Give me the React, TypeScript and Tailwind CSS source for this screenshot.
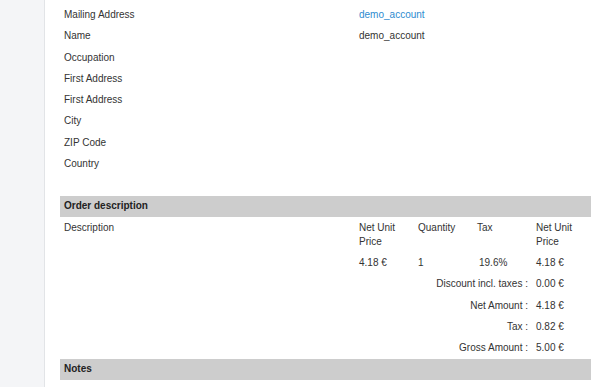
import React from 'react';

const cell = 'px-1 py-[3.65px] leading-[14px] align-top';

const customer: { label: string; value?: string; link?: boolean }[] = [
  { label: 'Mailing Address', value: 'demo_account', link: true },
  { label: 'Name', value: 'demo_account' },
  { label: 'Occupation' },
  { label: 'First Address' },
  { label: 'First Address' },
  { label: 'City' },
  { label: 'ZIP Code' },
  { label: 'Country' },
];

const totals = [
  { label: 'Discount incl. taxes :', value: '0.00 €' },
  { label: 'Net Amount :', value: '4.18 €' },
  { label: 'Tax :', value: '0.82 €' },
  { label: 'Gross Amount :', value: '5.00 €' },
];

function SectionBar({ title }: { title: string }) {
  return (
    <div className="bg-[#cdcdcd] px-1 py-[3.65px] leading-[14px] font-bold text-[#222]">
      {title}
    </div>
  );
}

export default function App() {
  return (
    <div
      className="flex h-[387px] w-[600px] overflow-hidden bg-white text-[10px] text-[#333]"
      style={{ fontFamily: '"Liberation Sans", Arial, sans-serif' }}
    >
      <aside className="w-[45px] shrink-0 border-r border-[#e2e4e7] bg-[#f4f5f7]" />
      <main className="flex-1 pt-[4.3px] pl-[15px] pr-[9px]">
        <table className="w-full table-fixed border-collapse">
          <colgroup>
            <col className="w-[295px]" />
            <col />
          </colgroup>
          <tbody>
            {customer.map((row, i) => (
              <tr key={i}>
                <td className={cell}>{row.label}</td>
                <td className={`${cell} ${row.link ? 'text-[#2e8bcf]' : ''}`}>{row.value}</td>
              </tr>
            ))}
            <tr>
              <td className={cell}>&nbsp;</td>
              <td className={cell}></td>
            </tr>
          </tbody>
        </table>

        <SectionBar title="Order description" />
        <table className="w-full table-fixed border-collapse">
          <colgroup>
            <col className="w-[295px]" />
            <col className="w-[59px]" />
            <col className="w-[59px]" />
            <col className="w-[59px]" />
            <col />
          </colgroup>
          <tbody>
            <tr>
              <td className={cell}>Description</td>
              <td className={cell}>
                Net Unit
                <br />
                Price
              </td>
              <td className={cell}>Quantity</td>
              <td className={cell}>Tax</td>
              <td className={cell}>
                Net Unit
                <br />
                Price
              </td>
            </tr>
            <tr>
              <td className={cell}></td>
              <td className={cell}>4.18 €</td>
              <td className={cell}>1</td>
              <td className={`${cell} pl-[6px]`}>19.6%</td>
              <td className={cell}>4.18 €</td>
            </tr>
            {totals.map((t) => (
              <tr key={t.label}>
                <td colSpan={4} className={`${cell} text-right`}>
                  {t.label}
                </td>
                <td className={cell}>{t.value}</td>
              </tr>
            ))}
          </tbody>
        </table>
        <SectionBar title="Notes" />
      </main>
    </div>
  );
}
